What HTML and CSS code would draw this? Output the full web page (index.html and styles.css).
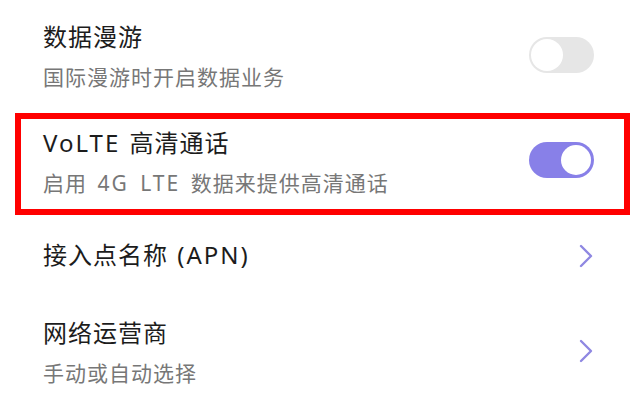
FILE: index.html
```html
<!DOCTYPE html>
<html lang="zh-CN">
<head>
  <meta charset="UTF-8" />
  <meta name="viewport" content="width=device-width, initial-scale=1.0"/>
  <title>移动网络</title>
  <link rel="stylesheet" href="styles.css">
</head>
<body>

  <div class="list">

    <div class="row row-roaming">
      <div class="text">
        <div class="title">数据漫游</div>
        <div class="sub">国际漫游时开启数据业务</div>
      </div>
      <span class="switch"></span>
    </div>

    <div class="row row-volte">
      <div class="text">
        <div class="title"><span class="lat">VoLTE</span> 高清通话</div>
        <div class="sub">启用 <span class="lat">4G LTE</span> 数据来提供高清通话</div>
      </div>
      <span class="switch on"></span>
    </div>

    <div class="row row-apn">
      <div class="text">
        <div class="title">接入点名称 <span class="lat">(APN)</span></div>
      </div>
      <svg class="chevron" width="14" height="24" viewBox="0 0 14 24">
        <polyline points="2,2 12,12 2,22" />
      </svg>
    </div>

    <div class="row row-carrier">
      <div class="text">
        <div class="title">网络运营商</div>
        <div class="sub">手动或自动选择</div>
      </div>
      <svg class="chevron" width="14" height="24" viewBox="0 0 14 24">
        <polyline points="2,2 12,12 2,22" />
      </svg>
    </div>

  </div>

</body>
</html>
```

FILE: styles.css
```css
:root {
  --title: #1c1c1c;
  --sub: #777777;
  --accent: #8880e8;
  --track: #e6e6e6;
  --mark: #ff0000;
}

* { box-sizing: border-box; }

body {
  margin: 0;
  background: #ffffff;
  font-family: "Noto Sans", "Noto Sans CJK SC", sans-serif;
  overflow: hidden;
}

.row {
  display: flex;
  align-items: flex-start;
  justify-content: space-between;
  padding: 0 46px 0 43px;
}

.text {
  display: flex;
  flex-direction: column;
}

.title {
  font-size: 24px;
  line-height: 32px;
  letter-spacing: 1px;
  word-spacing: 2px;
  color: var(--title);
}

.sub {
  margin-top: 9px;
  font-size: 21px;
  line-height: 30px;
  letter-spacing: 1px;
  word-spacing: 4px;
  color: var(--sub);
}

.lat {
  letter-spacing: 2px;
}

/* rows */
.row-roaming { height: 113px; }
.row-roaming .text { margin-top: 21px; }
.row-roaming .switch { margin-top: 37px; }

.row-volte {
  height: 102px;
  margin: 0 10px 0 15px;
  border: 6px solid var(--mark);
  padding: 0 30px 0 22px;
}
.row-volte .text { margin-top: 8px; }
.row-volte .switch { margin-top: 23px; }

.row-apn { height: 80px; }
.row-apn .text { margin-top: 24px; }
.row-apn .chevron { margin-top: 29px; }

.row-carrier { height: 103px; }
.row-carrier .text { margin-top: 22px; }
.row-carrier .chevron { margin-top: 44px; }

/* controls */
.switch {
  position: relative;
  width: 65px;
  height: 36px;
  border-radius: 18px;
  background: var(--track);
  flex-shrink: 0;
}

.switch::after {
  content: "";
  position: absolute;
  left: 2px;
  top: 2px;
  width: 32px;
  height: 32px;
  border-radius: 50%;
  background: #ffffff;
}

.switch.on {
  background: var(--accent);
}

.switch.on::after {
  left: auto;
  right: 3px;
  top: 3px;
  width: 30px;
  height: 30px;
}

.chevron {
  margin-right: 1px;
  flex-shrink: 0;
}

.chevron polyline {
  fill: none;
  stroke: #8f88e2;
  stroke-width: 2.4;
  stroke-linecap: round;
  stroke-linejoin: round;
}
```
